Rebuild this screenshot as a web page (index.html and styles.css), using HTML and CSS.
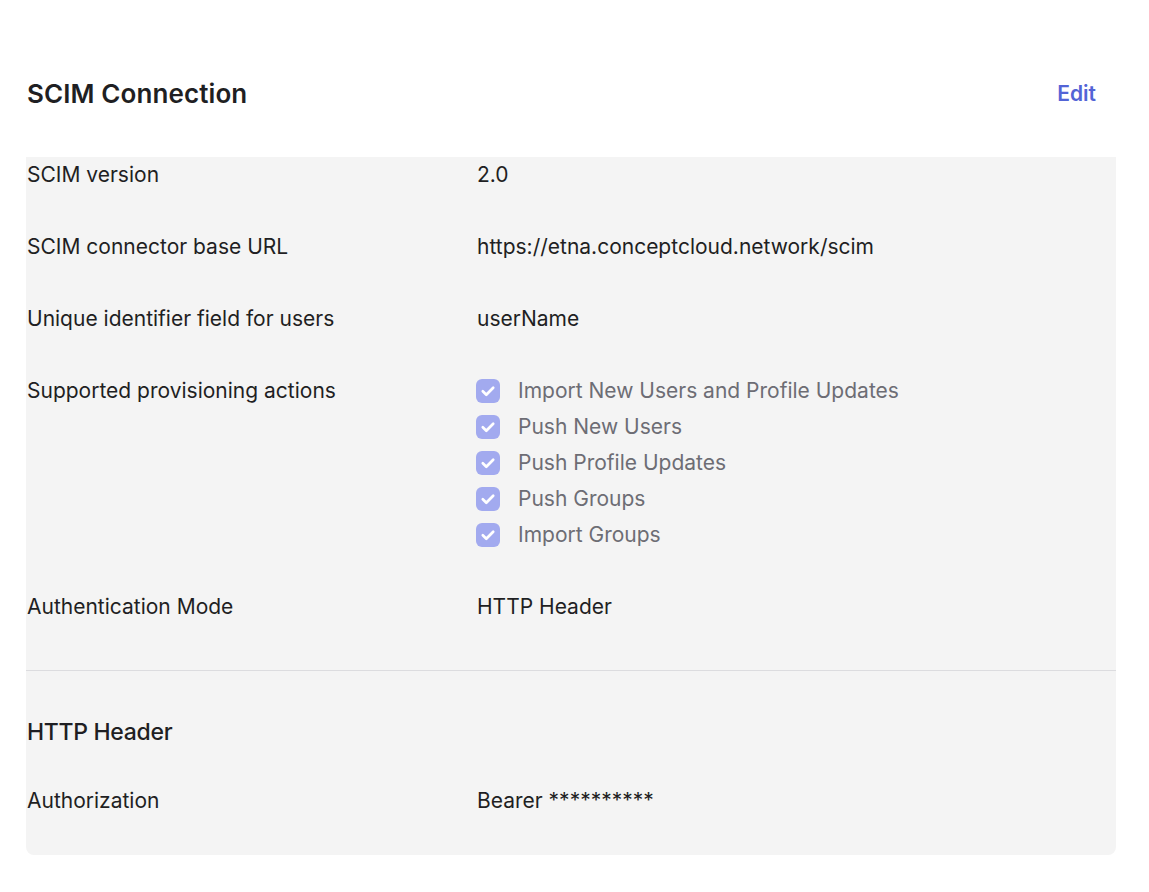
FILE: index.html
```html
<!DOCTYPE html>
<html>
<head>
<meta charset="utf-8">
<link rel="stylesheet" href="styles.css">
</head>
<body>
<div class="page">
  <div class="header">
    <h2 class="title">SCIM Connection</h2>
    <a class="edit" href="#">Edit</a>
  </div>
  <div class="panel">
    <div class="section">
      <div class="row"><div class="label">SCIM version</div><div class="value">2.0</div></div>
      <div class="row"><div class="label">SCIM connector base URL</div><div class="value">https://etna.conceptcloud.network/scim</div></div>
      <div class="row"><div class="label">Unique identifier field for users</div><div class="value">userName</div></div>
      <div class="row"><div class="label">Supported provisioning actions</div>
        <div class="value">
          <ul class="checks">
            <li><span class="box"><svg viewBox="0 0 24 24" width="24" height="24"><path d="M6.8 12.3l3.5 3.4 6.9-7" fill="none" stroke="#fff" stroke-width="2.7" stroke-linecap="round" stroke-linejoin="round"/></svg></span>Import New Users and Profile Updates</li>
            <li><span class="box"><svg viewBox="0 0 24 24" width="24" height="24"><path d="M6.8 12.3l3.5 3.4 6.9-7" fill="none" stroke="#fff" stroke-width="2.7" stroke-linecap="round" stroke-linejoin="round"/></svg></span>Push New Users</li>
            <li><span class="box"><svg viewBox="0 0 24 24" width="24" height="24"><path d="M6.8 12.3l3.5 3.4 6.9-7" fill="none" stroke="#fff" stroke-width="2.7" stroke-linecap="round" stroke-linejoin="round"/></svg></span>Push Profile Updates</li>
            <li><span class="box"><svg viewBox="0 0 24 24" width="24" height="24"><path d="M6.8 12.3l3.5 3.4 6.9-7" fill="none" stroke="#fff" stroke-width="2.7" stroke-linecap="round" stroke-linejoin="round"/></svg></span>Push Groups</li>
            <li><span class="box"><svg viewBox="0 0 24 24" width="24" height="24"><path d="M6.8 12.3l3.5 3.4 6.9-7" fill="none" stroke="#fff" stroke-width="2.7" stroke-linecap="round" stroke-linejoin="round"/></svg></span>Import Groups</li>
          </ul>
        </div>
      </div>
      <div class="row"><div class="label">Authentication Mode</div><div class="value">HTTP Header</div></div>
    </div>
    <div class="section section-auth">
      <h3 class="subtitle">HTTP Header</h3>
      <div class="row row-last"><div class="label">Authorization</div><div class="value">Bearer **********</div></div>
    </div>
  </div>
</div>
</body>
</html>
```
FILE: styles.css
```css
* { box-sizing: border-box; }
html, body { margin: 0; padding: 0; background: #fff; }
body {
  font-family: Inter, "Noto Sans", sans-serif;
  color: #1f1f23;
  -webkit-font-smoothing: antialiased;
}
.page {
  padding: 0 33px 0 26px;
}
.header {
  display: flex;
  justify-content: space-between;
  align-items: center;
  height: 157px;
  padding-top: 60px;
  padding-bottom: 30px;
}
.title {
  margin: 0;
  font-size: 26px;
  font-weight: 600;
  letter-spacing: 0.1px;
  line-height: 34px;
  padding-left: 1px;
}
.edit {
  font-size: 21px;
  font-weight: 600;
  color: #5364d6;
  text-decoration: none;
  margin-right: 20px;
  line-height: 26px;
}
.panel {
  background: #f4f4f4;
  border-radius: 0 0 8px 8px;
}
.section {
  padding-bottom: 9px;
  border-bottom: 1px solid #dcdcdf;
}
.section-auth {
  border-bottom: none;
  padding-top: 47px;
  padding-bottom: 0;
}
.row {
  display: grid;
  grid-template-columns: 450px 1fr;
  padding: 6px 0 42px;
  font-size: 21px;
  line-height: 24px;
}
.label, .value { padding-left: 1px; }
.row-last { padding-bottom: 42px; }
.checks {
  list-style: none;
  margin: 0 0 0 -1px;
  padding: 0;
  display: flex;
  flex-direction: column;
  gap: 12px;
}
.checks li {
  display: flex;
  align-items: center;
  gap: 18px;
  color: #6d6d74;
}
.box {
  width: 24px;
  height: 24px;
  border-radius: 6px;
  background: #a2aaef;
  display: flex;
  flex: none;
}
.subtitle {
  margin: 0 0 37px;
  font-size: 23px;
  font-weight: 500;
  line-height: 28px;
  letter-spacing: -0.3px;
  padding-left: 1px;
}
```
